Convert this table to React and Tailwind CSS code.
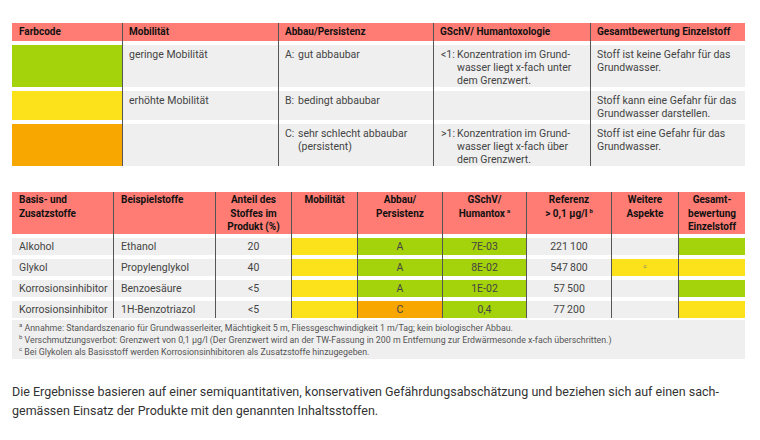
import React from 'react';

const RED = 'bg-[#ff7c74]';
const GREEN = 'bg-[#a4d20b]';
const YELLOW = 'bg-[#fce21a]';
const ORANGE = 'bg-[#f8a600]';
const GRAY = 'bg-[#efefef]';

const t1Widths = ['w-[110px]', 'w-[156px]', 'w-[155px]', 'w-[157px]', 'w-[155px]'];
const t2Widths = ['w-[101px]', 'w-[102px]', 'w-[76px]', 'w-[66px]', 'w-[85px]', 'w-[84px]', 'w-[85px]', 'w-[67px]', 'w-[67px]'];

function Cell({ width, first, gap, className, children }) {
  return (
    <div className={`${width} shrink-0 flex flex-col ${first ? '' : 'border-l border-[#555]'} ${gap ? 'pt-[4px]' : ''}`}>
      <div className={`flex-1 ${className}`}>{children}</div>
    </div>
  );
}

function Hang({ label, w, children }) {
  return (
    <div className="flex">
      <span className={`${w} shrink-0`}>{label}</span>
      <span>{children}</span>
    </div>
  );
}

const Sup = ({ children }) => (
  <span className="relative -top-[4px] text-[6px] leading-none ml-[2px]">{children}</span>
);

export default function App() {
  const t1Rows = [
    {
      color: GREEN,
      h: 'h-[43px]',
      mob: 'geringe Mobilität',
      abbau: <Hang label="A:" w="w-[13px]">gut abbaubar</Hang>,
      gschv: <Hang label="<1:" w="w-[16px]">Konzentration im Grund-<br />wasser liegt x-fach unter<br />dem Grenzwert.</Hang>,
      ges: <>Stoff ist keine Gefahr für das<br />Grundwasser.</>,
    },
    {
      color: YELLOW,
      h: 'h-[29px]',
      mob: 'erhöhte Mobilität',
      abbau: <Hang label="B:" w="w-[13px]">bedingt abbaubar</Hang>,
      gschv: null,
      ges: <>Stoff kann eine Gefahr für das<br />Grundwasser darstellen.</>,
    },
    {
      color: ORANGE,
      h: 'h-[43px]',
      mob: '',
      abbau: <Hang label="C:" w="w-[13px]">sehr schlecht abbaubar<br />(persistent)</Hang>,
      gschv: <Hang label=">1:" w="w-[16px]">Konzentration im Grund-<br />wasser liegt x-fach über<br />dem Grenzwert.</Hang>,
      ges: <>Stoff ist eine Gefahr für das<br />Grundwasser.</>,
    },
  ];

  const t2Rows = [
    { basis: 'Alkohol', stoff: 'Ethanol', anteil: '20', abbau: 'A', abbauC: GREEN, gschv: '7E-03', ref: '221\u2009100', weitere: null, ges: GREEN },
    { basis: 'Glykol', stoff: 'Propylenglykol', anteil: '40', abbau: 'A', abbauC: GREEN, gschv: '8E-02', ref: '547\u2009800', weitere: 'c', ges: YELLOW },
    { basis: 'Korrosionsinhibitor', stoff: 'Benzoesäure', anteil: '<5', abbau: 'A', abbauC: GREEN, gschv: '1E-02', ref: '57\u2009500', weitere: null, ges: GREEN },
    { basis: 'Korrosionsinhibitor', stoff: '1H-Benzotriazol', anteil: '<5', abbau: 'C', abbauC: ORANGE, gschv: '0,4', ref: '77\u2009200', weitere: null, ges: YELLOW },
  ];

  const body = 'text-[10.5px] leading-[13px] text-[#444]';
  const head = 'text-[10px] font-bold text-[#111]';
  const cellTxt = 'h-[17px] text-[10.5px] leading-[17px] text-[#444]';
  const headTxt = `${RED} h-[43px] ${head} leading-[13.5px] pt-[1px]`;

  return (
    <div className="w-[760px] h-[440px] bg-white font-['Roboto',sans-serif] overflow-hidden">
      {/* Farbcode-Legende */}
      <div className="ml-[12px] pt-[23px]">
        <div className="flex">
          {['Farbcode', 'Mobilität', 'Abbau/Persistenz', 'GSchV/ Humantoxologie', 'Gesamtbewertung Einzelstoff'].map((t, i) => (
            <Cell key={t} width={t1Widths[i]} first={i === 0} className={`${RED} h-[18px] ${head} leading-[18px] ${i === 0 ? 'pl-[7px]' : 'pl-[6px]'}`}>
              {t}
            </Cell>
          ))}
        </div>
        {t1Rows.map((r, idx) => (
          <div key={idx} className="flex">
            <Cell width={t1Widths[0]} first gap className={`${r.color} ${r.h}`} />
            <Cell width={t1Widths[1]} gap className={`${GRAY} ${r.h} ${body} pl-[6px] pt-[3px]`}>{r.mob}</Cell>
            <Cell width={t1Widths[2]} gap className={`${GRAY} ${r.h} ${body} pl-[6px] pt-[3px]`}>{r.abbau}</Cell>
            <Cell width={t1Widths[3]} gap className={`${GRAY} ${r.h} ${body} pl-[7px] pt-[3px]`}>{r.gschv}</Cell>
            <Cell width={t1Widths[4]} gap className={`${GRAY} ${r.h} ${body} pl-[6px] pt-[3px]`}>{r.ges}</Cell>
          </div>
        ))}
      </div>

      {/* Beispieltabelle */}
      <div className="ml-[12px] mt-[26px]">
        <div className="flex">
          <Cell width={t2Widths[0]} first className={`${headTxt} pl-[7px]`}>Basis- und<br />Zusatzstoffe</Cell>
          <Cell width={t2Widths[1]} className={`${headTxt} pl-[7px]`}>Beispielstoffe</Cell>
          <Cell width={t2Widths[2]} className={`${headTxt} text-center`}>Anteil des<br />Stoffes im<br />Produkt (%)</Cell>
          <Cell width={t2Widths[3]} className={`${headTxt} text-center`}>Mobilität</Cell>
          <Cell width={t2Widths[4]} className={`${headTxt} text-center`}>Abbau/<br />Persistenz</Cell>
          <Cell width={t2Widths[5]} className={`${headTxt} text-center`}>GSchV/<br />Humantox<Sup>a</Sup></Cell>
          <Cell width={t2Widths[6]} className={`${headTxt} text-center`}>Referenz<br />&gt; 0,1 µg/l<Sup>b</Sup></Cell>
          <Cell width={t2Widths[7]} className={`${headTxt} text-center`}>Weitere<br />Aspekte</Cell>
          <Cell width={t2Widths[8]} className={`${headTxt} text-center`}>Gesamt-<br />bewertung<br />Einzelstoff</Cell>
        </div>
        {t2Rows.map((r) => (
          <div key={r.stoff} className="flex">
            <Cell width={t2Widths[0]} first gap className={`${GRAY} ${cellTxt} pl-[7px]`}>{r.basis}</Cell>
            <Cell width={t2Widths[1]} gap className={`${GRAY} ${cellTxt} pl-[7px]`}>{r.stoff}</Cell>
            <Cell width={t2Widths[2]} gap className={`${GRAY} ${cellTxt} text-center`}>{r.anteil}</Cell>
            <Cell width={t2Widths[3]} gap className={`${YELLOW} h-[17px]`} />
            <Cell width={t2Widths[4]} gap className={`${r.abbauC} ${cellTxt} text-center`}>{r.abbau}</Cell>
            <Cell width={t2Widths[5]} gap className={`${GREEN} ${cellTxt} text-center`}>{r.gschv}</Cell>
            <Cell width={t2Widths[6]} gap className={`${GRAY} ${cellTxt} text-center`}>{r.ref}</Cell>
            <Cell width={t2Widths[7]} gap className={`${r.weitere ? YELLOW : GRAY} h-[17px] text-[6px] leading-[14px] text-[#777] text-center`}>{r.weitere}</Cell>
            <Cell width={t2Widths[8]} gap className={`${r.ges} h-[17px]`} />
          </div>
        ))}
        <div className={`${GRAY} mt-[2px] w-[733px] h-[39px] pl-[5px] pt-[2px] text-[8.8px] leading-[12.3px] text-[#555]`}>
          <div><Sup>a</Sup> Annahme: Standardszenario für Grundwasserleiter, Mächtigkeit 5 m, Fliessgeschwindigkeit 1 m/Tag; kein biologischer Abbau.</div>
          <div><Sup>b</Sup> Verschmutzungsverbot: Grenzwert von 0,1 µg/l (Der Grenzwert wird an der TW-Fassung in 200 m Entfernung zur Erdwärmesonde x-fach überschritten.)</div>
          <div><Sup>c</Sup> Bei Glykolen als Basisstoff werden Korrosionsinhibitoren als Zusatzstoffe hinzugegeben.</div>
        </div>
      </div>

      <p className="ml-[12px] mt-[23px] text-[12.5px] leading-[19px] text-[#333]">
        Die Ergebnisse basieren auf einer semiquantitativen, konservativen Gefährdungsabschätzung und beziehen sich auf einen sach-
        <br />
        gemässen Einsatz der Produkte mit den genannten Inhaltsstoffen.
      </p>
    </div>
  );
}
